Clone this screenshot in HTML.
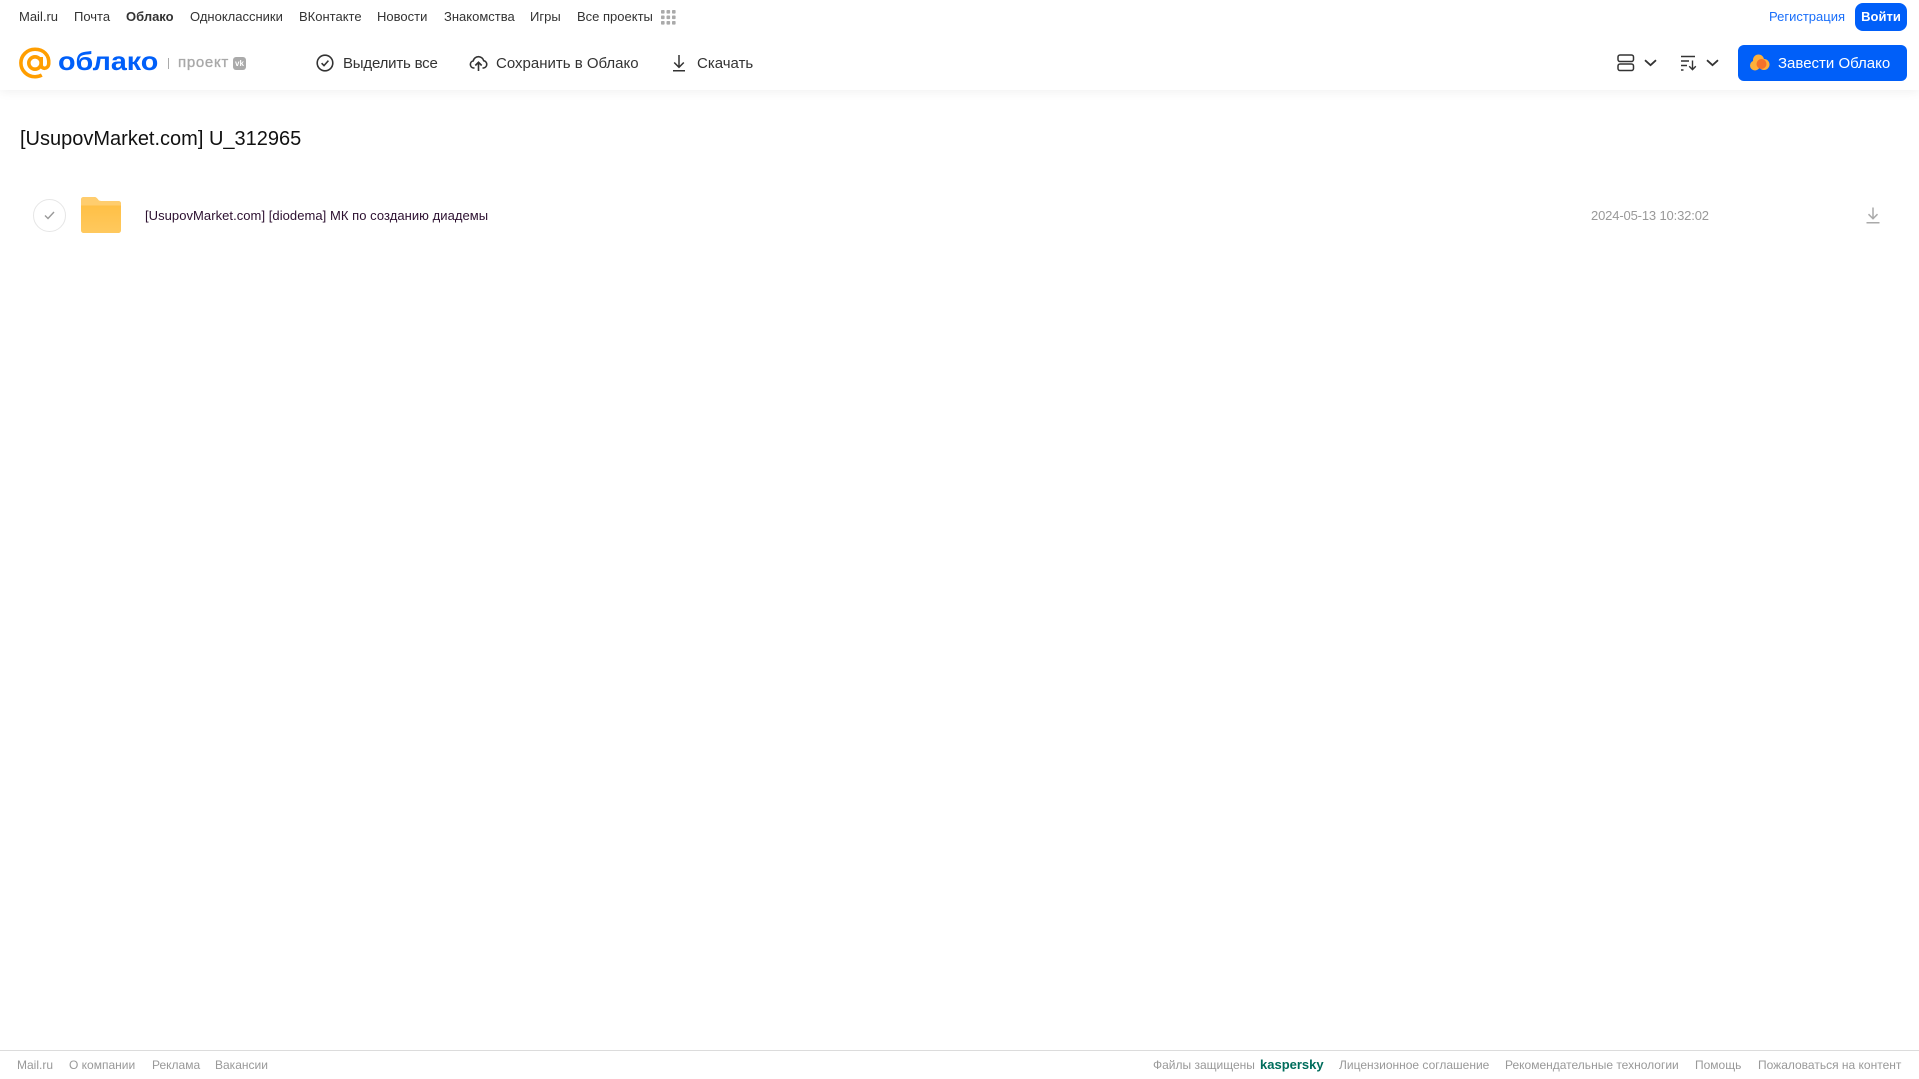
<!DOCTYPE html>
<html lang="ru"><head><meta charset="utf-8"><title>Облако</title>
<style>
html,body{margin:0;padding:0;background:#fff}
body{width:1919px;height:1079px;position:relative;overflow:hidden;font-family:"Liberation Sans",sans-serif}
.t{position:absolute;white-space:nowrap;line-height:20px}
.n{font-size:13px;color:#333;top:7px}
.a{font-size:15px;color:#333;top:53.500px}
.f{font-size:12px;color:#999;top:1055px}
svg{position:absolute;overflow:visible}
</style></head><body>
<div style="position:absolute;left:0;top:0;width:1919px;height:90px;background:#fff;box-shadow:0 2px 10px rgba(0,0,0,.06)"></div>

<span class="t n" style="left:19px">Mail.ru</span>
<span class="t n" style="left:74px">Почта</span>
<span class="t n" style="left:126px;font-weight:bold">Облако</span>
<span class="t n" style="left:190px">Одноклассники</span>
<span class="t n" style="left:299px">ВКонтакте</span>
<span class="t n" style="left:377px">Новости</span>
<span class="t n" style="left:444px">Знакомства</span>
<span class="t n" style="left:530px">Игры</span>
<span class="t n" style="left:577px">Все проекты</span>
<svg style="left:661px;top:10px" width="15" height="15" fill="#aaa"><rect x="0" y="0" width="3.600" height="3.600" rx=".8"/><rect x="5.500" y="0" width="3.600" height="3.600" rx=".8"/><rect x="11" y="0" width="3.600" height="3.600" rx=".8"/><rect x="0" y="5.500" width="3.600" height="3.600" rx=".8"/><rect x="5.500" y="5.500" width="3.600" height="3.600" rx=".8"/><rect x="11" y="5.500" width="3.600" height="3.600" rx=".8"/><rect x="0" y="11" width="3.600" height="3.600" rx=".8"/><rect x="5.500" y="11" width="3.600" height="3.600" rx=".8"/><rect x="11" y="11" width="3.600" height="3.600" rx=".8"/></svg>

<span class="t" style="left:1769px;top:7px;font-size:13px;color:#1a6ffa">Регистрация</span>
<div style="position:absolute;left:1855px;top:3px;width:52px;height:28px;border-radius:8px;background:#005ff9;color:#fff;font-size:13px;font-weight:bold;line-height:27px;text-align:center">Войти</div>

<svg style="left:19px;top:47px" width="32" height="32" viewBox="0 0 34 34" fill="none" stroke="#ff9e00" stroke-width="3.800"><circle cx="17" cy="17" r="6.600"/><path d="M23.600 10.600V19c0 5 7.400 5 8-1.200C32.400 8.500 26 2.400 17 2.400 8.600 2.400 2 9 2 17s6.600 14.600 15 14.600c2.800 0 5-.6 7.200-1.800"/></svg>
<span class="t" style="left:57.500px;top:46px;font-size:26px;line-height:30px;font-weight:bold;color:#005ff9;transform:scaleX(1.105);transform-origin:0 50%">облако</span>
<div style="position:absolute;left:168px;top:58px;width:1px;height:11px;background:#aaa"></div>
<span class="t" style="left:178px;top:53px;font-size:15px;color:#a8a8a8;-webkit-text-stroke:.35px #a8a8a8;letter-spacing:.7px">проект</span>
<div style="position:absolute;left:233px;top:57px;width:13px;height:13px;border-radius:3px;background:#aaa;color:#fff;font-size:8px;font-weight:bold;line-height:13px;text-align:center">vk</div>

<svg style="left:316px;top:54px" width="18" height="18" viewBox="0 0 18 18" fill="none" stroke="#333" stroke-width="1.600"><circle cx="9" cy="9" r="7.800"/><path d="M5.600 9.200l2.400 2.400 4.400-5"/></svg>
<span class="t a" style="left:343px;letter-spacing:-.2px">Выделить все</span>
<svg style="left:469px;top:54px" width="19" height="18" viewBox="0 0 19 18" fill="none" stroke="#333" stroke-width="1.600"><path d="M5.500 14H4.600A3.600 3.600 0 0 1 4.200 6.900 5.400 5.400 0 0 1 14.700 6.700 3.700 3.700 0 0 1 14.600 14H13.500"/><path d="M9.500 17V8.500M6.300 11.500l3.200-3.200 3.200 3.200"/></svg>
<span class="t a" style="left:496px">Сохранить в Облако</span>
<svg style="left:671px;top:54px" width="16" height="18" viewBox="0 0 16 18" fill="none" stroke="#333" stroke-width="1.500"><path d="M8 1v12M3.200 8.500L8 13.300l4.800-4.800M2 16.800h12"/></svg>
<span class="t a" style="left:697px">Скачать</span>

<svg style="left:1617px;top:54px" width="18" height="18" viewBox="0 0 18 18" fill="none" stroke="#333" stroke-width="1.500"><rect x="1" y="1" width="15.500" height="6.500" rx="2"/><rect x="1" y="10" width="15.500" height="6.500" rx="2"/></svg>
<svg style="left:1644px;top:59px" width="13" height="8" viewBox="0 0 13 8" fill="none" stroke="#333" stroke-width="1.800"><path d="M1 1.200l5.500 5 5.500-5"/></svg>
<svg style="left:1680px;top:55px" width="18" height="16" viewBox="0 0 18 16" fill="none" stroke="#333" stroke-width="1.400"><path d="M1 1.500h14M1 6h8M1 10.500h6M1 15h2.500M12.500 5.500v9M9.200 11.300l3.300 3.300 3.300-3.300"/></svg>
<svg style="left:1706px;top:59px" width="13" height="8" viewBox="0 0 13 8" fill="none" stroke="#333" stroke-width="1.800"><path d="M1 1.200l5.500 5 5.500-5"/></svg>
<div style="position:absolute;left:1738px;top:45px;width:169px;height:36px;border-radius:6px;background:#005ff9"></div>
<svg style="left:1749px;top:54px" width="21" height="17" viewBox="0 0 21 17"><g fill="#ffb03a"><circle cx="6" cy="11.500" r="5"/><circle cx="9.500" cy="6" r="5.500"/><circle cx="15" cy="10.500" r="5.500"/></g><circle cx="12.500" cy="10" r="5" fill="#f5722b"/></svg>
<span class="t" style="left:1778px;top:53.500px;font-size:15px;color:#fff">Завести Облако</span>

<span class="t" style="left:20px;top:126.500px;font-size:20px;line-height:24px;color:#111">[UsupovMarket.com] U_312965</span>

<div style="position:absolute;left:33px;top:199px;width:31px;height:31px;border:1px solid #e6e6e6;border-radius:50%"></div>
<svg style="left:44px;top:211px" width="11" height="9" viewBox="0 0 11 9" fill="none" stroke="#999" stroke-width="1.400"><path d="M1 4.500l3 3 6-6.500"/></svg>
<svg style="left:81px;top:197px" width="40" height="36" viewBox="0 0 40 36"><defs><linearGradient id="g" x1="0" y1="0" x2="0" y2="1"><stop offset="0" stop-color="#ffbd3f"/><stop offset="1" stop-color="#ffc95e"/></linearGradient></defs><path d="M3 0h10c2 0 3 1 4 2.500.8 1.200 1.500 1.500 3 1.500h17c2 0 3 1 3 3v26c0 2-1 3-3 3H3c-2 0-3-1-3-3V3C0 1 1 0 3 0Z" fill="url(#g)"/><path d="M0 8.500V3C0 1 1 0 3 0h10c2 0 3 1 4 2.500.8 1.200 1.500 1.500 3 1.500h17c2 0 3 1 3 3v1.500Z" fill="#ffcd6e"/></svg>
<span class="t" style="left:145px;top:206px;font-size:13px;color:#2c1030;letter-spacing:.05px">[UsupovMarket.com] [diodema] МК по созданию диадемы</span>
<span class="t" style="left:1591px;top:206px;font-size:13px;color:#999;letter-spacing:-.15px">2024-05-13 10:32:02</span>
<svg style="left:1866px;top:207px" width="14" height="17" viewBox="0 0 14 17" fill="none" stroke="#aaa" stroke-width="1.500"><path d="M7 .5v11M2.500 7.200L7 11.700l4.500-4.500M.5 15.800h13"/></svg>

<div style="position:absolute;left:0;top:1050px;width:1919px;height:1px;background:#dcdcdc"></div>
<span class="t f" style="left:17px">Mail.ru</span>
<span class="t f" style="left:69px">О компании</span>
<span class="t f" style="left:152px">Реклама</span>
<span class="t f" style="left:215px">Вакансии</span>
<span class="t f" style="left:1153px">Файлы защищены</span>
<span class="t f" style="left:1260px;font-weight:bold;font-size:13px;color:#006d5c">kaspersky</span>
<span class="t f" style="left:1339px">Лицензионное соглашение</span>
<span class="t f" style="left:1505px">Рекомендательные технологии</span>
<span class="t f" style="left:1695px">Помощь</span>
<span class="t f" style="left:1758px">Пожаловаться на контент</span>
</body></html>
